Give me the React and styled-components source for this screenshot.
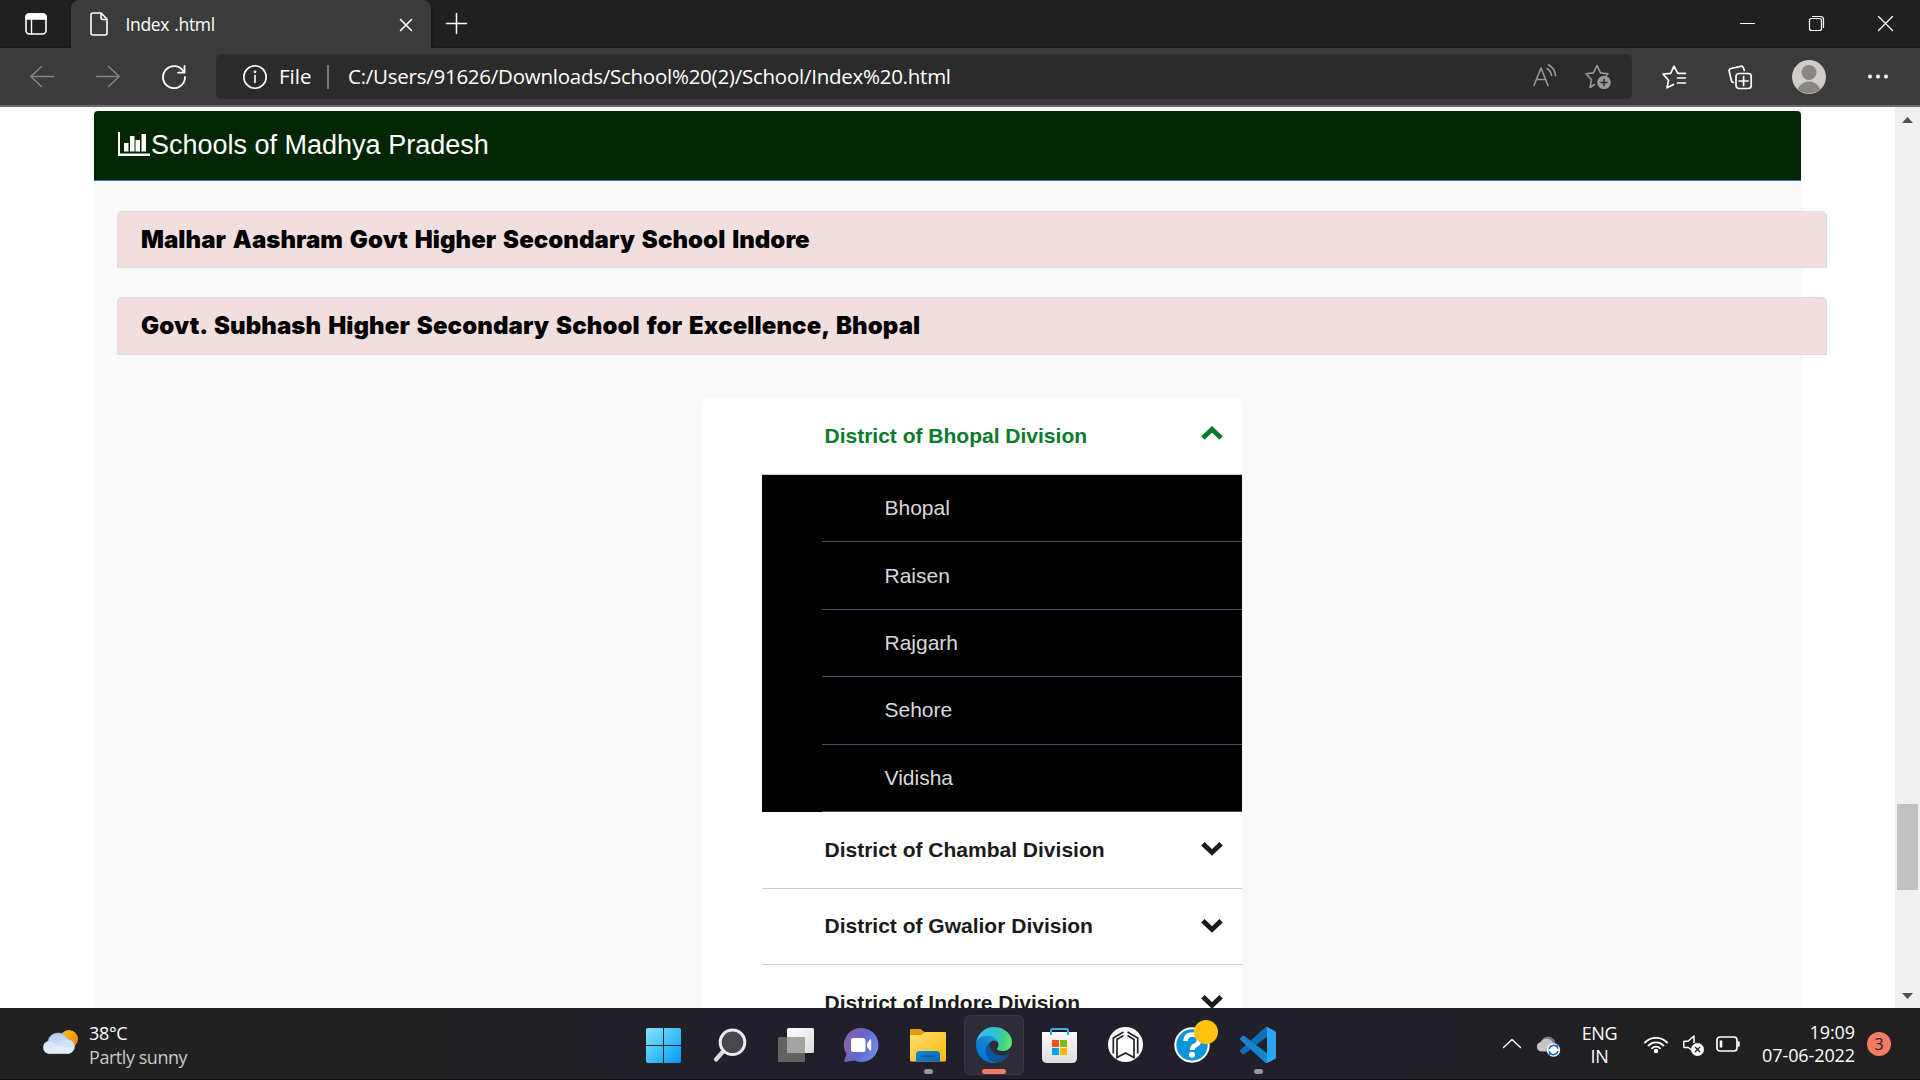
import React from "react";
import styled, { createGlobalStyle } from "styled-components";

const GlobalStyle = createGlobalStyle`
  * { box-sizing: border-box; }
  html, body { margin: 0; padding: 0; background: #fff; }
  body { width: 1920px; height: 1080px; overflow: hidden; font-family: "Liberation Sans", Arial, sans-serif; }
  svg { display: block; flex: none; overflow: visible; }
  ul { list-style: none; margin: 0; padding: 0; }
`;

const ui = `"Open Sans", "Noto Sans", sans-serif`;

const Screen = styled.div`
  width: 1920px;
  height: 1080px;
  display: flex;
  flex-direction: column;
  overflow: hidden;
`;

/* ---------- browser frame ---------- */
const TabStrip = styled.header`
  height: 48px;
  flex: none;
  display: flex;
  background: linear-gradient(#202020 46px, #181818);
  color: #fff;
`;
const Workspaces = styled.div`
  width: 71px;
  padding: 13px 0 0 25px;
`;
const Tab = styled.div`
  width: 360px;
  height: 48px;
  display: flex;
  align-items: center;
  padding: 0 18px 0 19px;
  background: #3b3b3b;
  border-radius: 8px 8px 0 0;
  box-shadow: 0 0 3px #111;
`;
const TabTitle = styled.span`
  flex: 1;
  margin-left: 17.5px;
  font: 17.5px/24px ${ui};
  letter-spacing: -0.35px;
  word-spacing: 1px;
  white-space: nowrap;
`;
const NewTab = styled.div`
  padding: 13px 0 0 15px;
`;
const WindowButtons = styled.div`
  margin-left: auto;
  display: flex;
  gap: 54px;
  padding: 16px 27px 0 0;
`;
const Toolbar = styled.div`
  height: 59px;
  flex: none;
  display: flex;
  align-items: center;
  background: #3b3b3b;
  border-bottom: 2px solid #6c6c6c;
  color: #fff;
`;
const NavButtons = styled.div`
  width: 216px;
  padding-left: 30px;
  display: flex;
  gap: 42px;
`;
const AddressBar = styled.div`
  width: 1416px;
  height: 45px;
  display: flex;
  align-items: center;
  padding: 0 21px 0 27px;
  background: #2b2b2b;
  border-radius: 6px;
`;
const AddressText = styled.span`
  padding-bottom: 2px;
  font: 20.5px/28px ${ui};
  letter-spacing: ${(p) => p.$spacing || "0"};
  white-space: nowrap;
`;
const Scheme = styled(AddressText)`
  width: 48px;
  margin-left: 12px;
`;
const Divider = styled.i`
  width: 2px;
  height: 24px;
  margin-right: 19px;
  background: #777;
`;
const AddressActions = styled.div`
  display: flex;
  gap: 28px;
  margin-left: auto;
`;
const ToolbarActions = styled.div`
  display: flex;
  align-items: center;
  margin-left: 30px;
  gap: 42px;
`;

/* ---------- page ---------- */
const Viewport = styled.div`
  height: 901px;
  flex: none;
  display: flex;
  overflow: hidden;
  background: #fff;
`;
const Page = styled.main`
  width: 1895px;
  padding-left: 93px;
`;
const Panel = styled.section`
  width: 1710px;
  height: 901px;
  padding-top: 4px;
  background: #f9f9f9;
`;
const PanelHeading = styled.h1`
  width: 1707px;
  height: 70px;
  margin: 0 0 30px 1px;
  padding: 0 0 3px 24px;
  display: flex;
  align-items: center;
  background: #022602;
  border-bottom: 1px solid #337ab7;
  border-radius: 4px 4px 0 0;
  color: #fff;
  font-size: 27px;
  font-weight: 400;
  line-height: 30px;
`;
const HeadingText = styled.span`
  margin-left: 1px;
  padding-top: 1px;
`;
const SchoolBar = styled.div`
  width: 1710px;
  height: ${(p) => p.$height}px;
  margin: 0 0 ${(p) => p.$gap}px 24px;
  padding: 0 23px;
  display: flex;
  align-items: center;
  background: #f2dede;
  border: 1px solid #ddd;
  border-radius: 5px 5px 0 0;
  color: #000;
  font: 900 24px/30px Inter, "Liberation Sans", sans-serif;
  letter-spacing: ${(p) => p.$spacing};
  word-spacing: 2px;
  white-space: nowrap;
`;
const Accordion = styled.ul`
  width: 540px;
  height: 640px;
  margin-left: 609px;
  background: #fff;
  border-radius: 6px;
  && { padding-left: 60px; }
`;
const Division = styled.div`
  height: ${(p) => (p.$open ? 77 : 76.6)}px;
  padding: 0 19.5px 0 62.5px;
  display: flex;
  align-items: center;
  justify-content: space-between;
  border-bottom: 1px solid #ccc;
  color: ${(p) => (p.$open ? "#0b7a2c" : "#1a1a1a")};
  font-size: 21px;
  font-weight: 700;
  line-height: 24px;
`;
const Submenu = styled.ul`
  background: #000;
  && { padding-left: 60px; }
`;
const District = styled.li`
  height: 67.4px;
  padding-left: 62.5px;
  display: flex;
  align-items: center;
  border-bottom: 1px solid #4b4a5e;
  color: #d9d9d9;
  font-size: 21px;
  line-height: 24px;
`;
const ChevronBox = styled.span`
  margin-bottom: ${(p) => (p.$up ? 6 : 1)}px;
`;
const Scrollbar = styled.aside`
  width: 25px;
  display: flex;
  flex-direction: column;
  align-items: center;
  padding: 10px 0 9px;
  background: #f0f0f0;
`;
const Thumb = styled.div`
  width: 21px;
  height: 86px;
  margin: 681px 0 auto;
  background: #c1c1c1;
`;

/* ---------- taskbar ---------- */
const Taskbar = styled.footer`
  height: 72px;
  flex: none;
  display: flex;
  background: linear-gradient(90deg, #212121, #212121 20%, #211f2a 38%, #211f2a 66%, #202020 88%);
  border-bottom: 1px solid #180a12;
  color: #fff;
  font: 18px/24px ${ui};
`;
const Weather = styled.div`
  width: 634px;
  padding: 13px 0 0 42px;
  display: flex;
`;
const WeatherText = styled.div`
  margin-left: 11px;
  display: flex;
  flex-direction: column;
  letter-spacing: -0.35px;
`;
const Muted = styled.span`
  color: #c8c8c8;
  letter-spacing: -0.45px;
`;
const Apps = styled.nav`
  display: flex;
  gap: 6px;
  padding-top: 7px;
`;
const AppButton = styled.div`
  width: 60px;
  height: 60px;
  padding: 11px 11px 0;
  display: flex;
  flex-direction: column;
  align-items: center;
  border: 1px solid ${(p) => (p.$active ? "#3a3842" : "transparent")};
  border-radius: 6px;
  background: ${(p) => (p.$active ? "#2e2c37" : "transparent")};
`;
const Running = styled.i`
  width: ${(p) => (p.$active ? 24 : 9)}px;
  height: 5px;
  flex: none;
  margin-top: 6px;
  border-radius: 3px;
  background: ${(p) => (p.$active ? "#f47c62" : "#97969c")};
`;
const Tray = styled.div`
  margin-left: auto;
  display: flex;
  align-items: flex-start;
`;
const Stack = styled.div`
  display: flex;
  flex-direction: column;
  align-items: ${(p) => p.$align};
  width: ${(p) => p.$width}px;
  padding-top: ${(p) => p.$top}px;
  line-height: 23px;
  letter-spacing: ${(p) => p.$spacing || "0"};
  white-space: nowrap;
`;
const TrayIcon = styled.div`
  margin: ${(p) => p.$top}px ${(p) => p.$right}px 0 ${(p) => p.$left || 0}px;
`;
const Badge = styled.span`
  width: 24px;
  height: 24px;
  margin: 24px 29px 0 12px;
  display: flex;
  align-items: center;
  justify-content: center;
  border-radius: 50%;
  background: #f47c62;
  color: #241a1a;
  font-size: 16px;
`;

const Line = ({ w, h, d, sw = 1.6, color = "#fff", children }) => (
  <svg width={w} height={h} viewBox={`0 0 ${w} ${h}`} fill="none" stroke={color} strokeWidth={sw} strokeLinecap="round" strokeLinejoin="round">
    {d && <path d={d} />}
    {children}
  </svg>
);

const Chevron = ({ up }) => (
  <ChevronBox $up={up}>
    <svg width="22" height="14" viewBox="0 0 22 14" fill="none" stroke="currentColor" strokeWidth="4.900">
      <path d={up ? "M1.900 12 11 3.300 20.100 12" : "M1.900 1.700 11 10.400 20.100 1.700"} />
    </svg>
  </ChevronBox>
);

const icons = {
  start: (
    <svg width="36" height="36">
      <defs>
        <linearGradient id="win" x1="0" y1="0" x2="36" y2="36" gradientUnits="userSpaceOnUse">
          <stop offset="0" stopColor="#8be4fe" /><stop offset=".5" stopColor="#3fc2fb" /><stop offset="1" stopColor="#0495f8" />
        </linearGradient>
      </defs>
      <path fill="url(#win)" d="M2 1h15v17H0V3q0-2 2-2zM18 1h15q2 0 2 2v15H18zM0 19h17v17H2q-2 0-2-2zM18 19h17v15q0 2-2 2H18z" />
    </svg>
  ),
  search: (
    <svg width="36" height="36">
      <path d="M11.500 24 4 32.500" stroke="#dcdcde" strokeWidth="4.200" strokeLinecap="round" />
      <circle cx="20.500" cy="15.300" r="12.300" fill="#47464f" stroke="#ececee" strokeWidth="3" />
    </svg>
  ),
  tasks: (
    <svg width="36" height="36">
      <defs>
        <linearGradient id="tv" x1="0" y1="0" x2="1" y2="1"><stop offset="0" stopColor="#fff" /><stop offset="1" stopColor="#dcdcdc" /></linearGradient>
      </defs>
      <rect x="0" y="10" width="27" height="25" rx="1.500" fill="#62625f" />
      <rect x="9" y="1" width="27" height="25" rx="1.500" fill="url(#tv)" />
      <path d="M9 10h18v16H10.500q-1.500 0-1.500-1.500z" fill="#a3a3a3" />
    </svg>
  ),
  chat: (
    <svg width="36" height="36">
      <defs>
        <linearGradient id="ch" x1="0" y1=".2" x2="1" y2=".6"><stop offset="0" stopColor="#8d62a8" /><stop offset=".5" stopColor="#6566c8" /><stop offset="1" stopColor="#6b8ae8" /></linearGradient>
      </defs>
      <path fill="url(#ch)" d="M17.500 1a17 17 0 1 1-7 32.500L1 35q-1.300 0-.7-1.500L2.500 27A17 17 0 0 1 17.500 1z" />
      <rect x="7" y="11" width="14.500" height="14" rx="2.500" fill="#fff" />
      <path fill="#fff" d="M23 16.500 26 12.500q1.200-.6 1.200 1v9q0 1.600-1.200 1L23 20z" />
    </svg>
  ),
  folder: (
    <svg width="36" height="36">
      <defs>
        <linearGradient id="fo" x1="0" y1="0" x2="1" y2="1"><stop offset="0" stopColor="#ffdf72" /><stop offset="1" stopColor="#fdb90f" /></linearGradient>
        <linearGradient id="fb" x1="0" y1="0" x2="1" y2="1"><stop offset="0" stopColor="#138ad8" /><stop offset="1" stopColor="#0865b5" /></linearGradient>
      </defs>
      <path d="M0 3q0-1 1-1h9.500l4 3H25v8H0z" fill="#e29d05" />
      <path d="M0 8h11l4.500-3H35q1 0 1 1v27q0 1.500-1.500 1.500h-33Q0 34.500 0 33z" fill="url(#fo)" />
      <path d="M6 34.500v-7q0-3.500 3.500-3.500h17q3.500 0 3.500 3.500v7z" fill="url(#fb)" />
      <path d="M11 29h14" stroke="#064c8f" strokeWidth="1.300" />
    </svg>
  ),
  edge: (
    <svg width="36" height="36" viewBox="0 0 256 256">
      <defs>
        <linearGradient id="e1" x1="63" y1="178" x2="241" y2="178" gradientUnits="userSpaceOnUse"><stop offset="0" stopColor="#0c59a4" /><stop offset="1" stopColor="#114a8b" /></linearGradient>
        <linearGradient id="e2" x1="150" y1="95" x2="46" y2="215" gradientUnits="userSpaceOnUse"><stop offset="0" stopColor="#1b9de2" /><stop offset=".4" stopColor="#1482d0" /><stop offset="1" stopColor="#0078d8" /></linearGradient>
        <linearGradient id="e3" x1="10" y1="70" x2="250" y2="130" gradientUnits="userSpaceOnUse"><stop offset="0" stopColor="#35c1f1" /><stop offset=".45" stopColor="#2bc3d2" /><stop offset=".75" stopColor="#43d08b" /><stop offset="1" stopColor="#66eb6e" /></linearGradient>
      </defs>
      <path fill="url(#e1)" d="M231 190.500c-3.400 1.800-6.900 3.400-10.500 4.700a101.500 101.500 0 0 1-35.900 6.500c-47.300 0-88.500-32.500-88.500-74.300.1-11.400 6.400-21.900 16.400-27.300-42.800 1.800-53.800 46.400-53.800 72.500 0 73.900 68.100 81.400 82.800 81.400 7.900 0 19.800-2.300 27-4.600l1.300-.4a128.300 128.300 0 0 0 66.600-52.800 4 4 0 0 0-5.400-5.700z" />
      <path fill="url(#e2)" d="M105.700 241.400a79.200 79.200 0 0 1-22.700-21.300 80.700 80.700 0 0 1 29.500-120c3.200-1.500 8.500-4.100 15.600-4a32.400 32.400 0 0 1 25.700 13 31.900 31.900 0 0 1 6.300 18.700c0-.2 24.500-79.600-80-79.600-43.900 0-80 41.700-80 78.200-.2 19.300 4 38.500 12.100 56a128 128 0 0 0 156.400 67.100 75.500 75.500 0 0 1-62.800-8z" />
      <path fill="url(#e3)" d="M152.300 148.900c-.9 1-3.400 2.500-3.400 5.600 0 2.600 1.700 5.200 4.800 7.300 14.300 10 41.400 8.600 41.500 8.600a59.600 59.600 0 0 0 30.300-8.300A61.400 61.400 0 0 0 255.900 109.300c.3-22.400-8-37.300-11.300-43.900C223.500 23.900 177.700 0 128 0A128 128 0 0 0 0 126.200c.5-36.500 36.800-66 80-66 3.500 0 23.500.3 42 10.100 16.300 8.500 24.900 18.900 30.800 29.200 6.200 10.700 7.300 24.100 7.300 29.500s-2.700 13.300-7.800 19.900z" />
    </svg>
  ),
  store: (
    <svg width="36" height="36">
      <defs><linearGradient id="st" x1="0" y1="0" x2="0" y2="1"><stop offset="0" stopColor="#fbfbfb" /><stop offset="1" stopColor="#dedede" /></linearGradient></defs>
      <path d="M0 5h35v26q0 5-5 5H5q-5 0-5-5z" fill="url(#st)" />
      <path d="M9 8V3.500Q9 2 10.500 2h14Q26 2 26 3.500V8" fill="none" stroke="#2db3ee" strokeWidth="2" />
      <path fill="#f25022" d="M10 13h7v7h-7z" /><path fill="#7fba00" d="M18 13h7v7h-7z" />
      <path fill="#00a4ef" d="M10 21h7v7h-7z" /><path fill="#ffb900" d="M18 21h7v7h-7z" />
    </svg>
  ),
  hub: (
    <svg width="36" height="36">
      <circle cx="17.500" cy="17.500" r="17.500" fill="#fff" />
      <g fill="none" stroke="#24232b" strokeWidth="1.700">
        <path d="M15.500 5 5.300 11v15.500M19.500 5l10.200 6v15.500" />
        <path d="M15.500 8.500 9 12.500v18l8.500-4.500 8.500 4.500v-18l-6.500-4" />
      </g>
    </svg>
  ),
  help: (
    <svg width="36" height="36">
      <circle cx="18" cy="18" r="16.700" fill="#0c96d8" stroke="#fff" strokeWidth="2" />
      <path d="M11.500 14q.3-6.500 7-6.500 6.500.3 6.500 5.700 0 3.500-4 5.500-2.800 1.300-2.800 4.300" fill="none" stroke="#fff" strokeWidth="4.600" />
      <circle cx="18" cy="27.800" r="3" fill="#fff" />
      <circle cx="32" cy="5" r="12" fill="#ffc20e" />
    </svg>
  ),
  code: (
    <svg width="36" height="36" viewBox="0 0 100 100">
      <path fill="#0e70b8" d="M96.500 10.800 75.900.9a6.200 6.200 0 0 0-7.100 1.200L1.300 63.600a4.200 4.200 0 0 0 0 6.200l5.500 5a4.200 4.200 0 0 0 5.400.2L93.400 13.400c2.700-2.100 6.600-.1 6.600 3.300v-.3a6.200 6.200 0 0 0-3.500-5.600z" />
      <path fill="#1583cd" d="m96.500 89.200-20.600 9.900a6.200 6.200 0 0 1-7.100-1.200L1.300 36.400a4.200 4.200 0 0 1 0-6.200l5.500-5a4.200 4.200 0 0 1 5.400-.2l81.200 61.600c2.700 2.100 6.600.1 6.600-3.300v.3a6.200 6.200 0 0 1-3.500 5.600z" />
      <path fill="#2aa5f2" d="M75.900 99.100a6.200 6.200 0 0 1-7.100-1.200c2.300 2.300 6.200.7 6.200-2.600V4.700c0-3.300-3.900-4.900-6.200-2.600a6.200 6.200 0 0 1 7.100-1.200l20.600 9.900a6.200 6.200 0 0 1 3.500 5.600v67.200a6.200 6.200 0 0 1-3.500 5.600z" />
    </svg>
  ),
};

const apps = [
  { id: "start" }, { id: "search" }, { id: "tasks" }, { id: "chat" },
  { id: "folder", running: true }, { id: "edge", running: true, active: true },
  { id: "store" }, { id: "hub" }, { id: "help" }, { id: "code", running: true },
];

const divisions = [
  { name: "Bhopal", districts: ["Bhopal", "Raisen", "Rajgarh", "Sehore", "Vidisha"] },
  { name: "Chambal" },
  { name: "Gwalior" },
  { name: "Indore" },
];

export default function App() {
  return (
    <Screen>
      <GlobalStyle />
      <TabStrip>
        <Workspaces>
          <Line w={22} h={22}>
            <rect x="1" y="1" width="20" height="20" rx="3.500" />
            <path d="M1 6V4q0-3 3-3h14q3 0 3 3v2z" fill="#fff" />
            <path d="M6.500 6v15" strokeWidth="1.400" />
          </Line>
        </Workspaces>
        <Tab>
          <Line w={18} h={24} d="M3 1h8l6 6v14q0 2-2 2H3q-2 0-2-2V3q0-2 2-2zM11 1v4.500Q11 7.500 13 7.500h4" />
          <TabTitle>Index .html</TabTitle>
          <Line w={14} h={14} d="M1.500 2.500l11 11M12.500 2.500l-11 11" />
        </Tab>
        <NewTab><Line w={21} h={21} d="M10.500 .5v20M.5 10.500h20" sw={1.5} /></NewTab>
        <WindowButtons>
          <Line w={15} h={15} d="M.5 7.500h14" sw={1.2} />
          <Line w={15} h={15} d="M2.500 2.500h8q2 0 2 2v8q0 2-2 2h-8q-2 0-2-2v-8q0-2 2-2zM3.500 .5h8q3 0 3 3v8" sw={1.2} />
          <Line w={15} h={15} d="M.5 .5l14 14M14.500 .5l-14 14" sw={1.3} />
        </WindowButtons>
      </TabStrip>

      <Toolbar>
        <NavButtons>
          <Line w={24} h={24} color="#858585" sw={1.5} d="M23.500 11.500H.8M11.500 1.500l-10.700 10 10.700 10" />
          <Line w={24} h={24} color="#858585" sw={1.5} d="M.5 11.500h22.700M12.500 1.500l10.700 10-10.700 10" />
          <Line w={24} h={24} sw={1.8} d="M22 7.500A11 11 0 1 0 23 12M22.500 1v6.700h-6.500" />
        </NavButtons>
        <AddressBar>
          <Line w={24} h={24} sw={1.6}>
            <circle cx="12" cy="12" r="11.200" />
            <path d="M12 10.500v7" />
            <circle cx="12" cy="6.800" r=".6" fill="#fff" />
          </Line>
          <Scheme>File</Scheme>
          <Divider />
          <AddressText $spacing="-0.25px">C:/Users/91626/Downloads/School%20(2)/School/Index%20.html</AddressText>
          <AddressActions>
            <Line w={24} h={24} color="#999" d="M1 21.500 8 4l7 17.500M3.500 15.500h9M14 4.500q4 2.500 4.500 7M15.500 .8q6.500 3.700 7 11" />
            <Line w={26} h={26} color="#999">
              <path d="M9.500 20.500 5 23.500l1.500-7.700L1 9.800l7.500-.9L12 1.500l3.500 7.400 7.500 .9-1.500 1.800" />
              <circle cx="19" cy="18.500" r="6" fill="#999" />
              <path d="M19 15.500v6M16 18.500h6" stroke="#2b2b2b" />
            </Line>
          </AddressActions>
        </AddressBar>
        <ToolbarActions>
          <Line w={24} h={24} sw={1.7} d="M23.500 8.300h-7.700L12 1.200 8.600 8.300 1 9.200l5.500 6L5 22.800l6.500-3.300M15.500 13h8M15.500 18h8" />
          <Line w={24} h={24} sw={1.7}>
            <rect x="8" y="8.500" width="15.200" height="15" rx="3" />
            <path d="M15.600 11.500v9M11.100 16h9M16.200 5.500l-.8-2.700q-.7-2-2.800-1.500L3 3.500Q.7 4.200 1.200 6.500L3.500 16q.4 1.300 2 1.500" />
          </Line>
          <svg width="32" height="34" viewBox="2 0 32 34">
            <defs><clipPath id="av"><circle cx="17" cy="17" r="16.500" /></clipPath></defs>
            <circle cx="17" cy="17" r="17" fill="#d0cecb" />
            <circle cx="17" cy="12.500" r="7.500" fill="#8a8683" />
            <circle cx="17" cy="33.500" r="12" fill="#8a8683" clipPath="url(#av)" />
          </svg>
          <svg width="20" height="6"><circle cx="2" cy="2.500" r="2" fill="#fff" /><circle cx="10" cy="2.500" r="2" fill="#fff" /><circle cx="18" cy="2.500" r="2" fill="#fff" /></svg>
        </ToolbarActions>
      </Toolbar>

      <Viewport>
        <Page>
          <Panel>
            <PanelHeading>
              <svg width="32" height="24" fill="#fff">
                <path d="M0 0h2v21.500h30V24H0zM6 11h4.500v8.500H6zM12 4h4.500v15.500H12zM17.500 8H22v11.500h-4.500zM23.500 2H28v17.500h-4.500z" />
              </svg>
              <HeadingText>Schools of Madhya Pradesh</HeadingText>
            </PanelHeading>
            <SchoolBar $height={57} $gap={29} $spacing="0.05px">Malhar Aashram Govt Higher Secondary School Indore</SchoolBar>
            <SchoolBar $height={58} $gap={43} $spacing="0.1px">Govt. Subhash Higher Secondary School for Excellence, Bhopal</SchoolBar>
            <Accordion>
              {divisions.map((d) => (
                <li key={d.name}>
                  <Division $open={!!d.districts}>
                    District of {d.name} Division
                    <Chevron up={!!d.districts} />
                  </Division>
                  {d.districts && (
                    <Submenu>{d.districts.map((n) => <District key={n}>{n}</District>)}</Submenu>
                  )}
                </li>
              ))}
            </Accordion>
          </Panel>
        </Page>
        <Scrollbar>
          <svg width="11" height="6"><path d="M0 6 5.500 0 11 6z" fill="#505050" /></svg>
          <Thumb />
          <svg width="11" height="6"><path d="M0 0h11L5.500 6z" fill="#505050" /></svg>
        </Scrollbar>
      </Viewport>

      <Taskbar>
        <Weather>
          <svg width="36" height="36" viewBox="0 -1 36 36">
            <defs>
              <linearGradient id="sun" x1="0" y1="0" x2="1" y2="1"><stop offset="0" stopColor="#ffc800" /><stop offset="1" stopColor="#f07a10" /></linearGradient>
              <linearGradient id="cl" x1="0" y1="0" x2="0" y2="1"><stop offset="0" stopColor="#b3cbf6" /><stop offset="1" stopColor="#e3ecf8" /></linearGradient>
            </defs>
            <circle cx="27" cy="17" r="9" fill="url(#sun)" />
            <path d="M7 31.500a6.300 6.300 0 0 1-1-12.300 10.500 10.500 0 0 1 20-1.500 7 7 0 0 1 1 13.800z" fill="url(#cl)" stroke="#9fb4d6" strokeWidth=".6" />
            <circle cx="25.500" cy="24.500" r="7" fill="#d5e2f6" />
            <circle cx="7.500" cy="25.500" r="6" fill="#dbe6f6" />
            <path d="M7 31.500q-4-.5-5.500-4 8-2 15-4 8 2 15 2-1.500 5.500-5.500 6z" fill="#e3ecf7" />
          </svg>
          <WeatherText>
            <span>38°C</span>
            <Muted>Partly sunny</Muted>
          </WeatherText>
        </Weather>
        <Apps>
          {apps.map((a) => (
            <AppButton key={a.id} $active={a.active}>
              {icons[a.id]}
              {a.running && <Running $active={a.active} />}
            </AppButton>
          ))}
        </Apps>
        <Tray>
          <TrayIcon $top={31} $right={15}><Line w={18} h={9} d="M.5 8.500 9 .5l8.500 8" sw={1.4} /></TrayIcon>
          <TrayIcon $top={28} $right={22}>
            <svg width="24" height="22">
              <circle cx="12" cy="8" r="7.500" fill="#777" />
              <path d="M5 15.500a4.900 4.900 0 0 1-.3-9.600 7 7 0 0 1 12.800 2.600v7z" fill="#c4c4c4" />
              <circle cx="17.500" cy="14" r="6.700" fill="#fff" />
              <path d="M13 13a4.700 4.700 0 0 1 8.500-1.500V9.300M22 15a4.700 4.700 0 0 1-8.500 1.500v2.200" fill="none" stroke="#0f6cbd" strokeWidth="1.500" />
            </svg>
          </TrayIcon>
          <Stack $align="center" $width={35} $top={13.5} $spacing="-0.3px"><span>ENG</span><span>IN</span></Stack>
          <TrayIcon $top={26} $right={15} $left={27}>
            <Line w={24} h={20} sw={1.8}>
              <path d="M1 8.500a15.500 15.500 0 0 1 22 0M4.500 11.500a10.600 10.600 0 0 1 15 0M8 14.300a5.800 5.800 0 0 1 8 0" />
              <circle cx="12" cy="17" r="1.300" fill="#fff" />
            </Line>
          </TrayIcon>
          <TrayIcon $top={27} $right={12}>
            <svg width="21" height="21" fill="none">
              <path d="M6 12.500H1.500q-.7 0-.7-.7V7q0-.7 .7-.7H5l6-5.300v7" stroke="#fff" strokeWidth="1.500" strokeLinejoin="round" />
              <path d="M5.500 12.500l3 2.500" stroke="#fff" strokeWidth="1.500" />
              <circle cx="14.500" cy="14.500" r="6.500" fill="#fff" />
              <path d="M12 12l5 5M17 12l-5 5" stroke="#222" strokeWidth="1.400" />
            </svg>
          </TrayIcon>
          <TrayIcon $top={28} $right={23}>
            <Line w={24} h={16} sw={1.7}>
              <rect x="1" y="1" width="20" height="14" rx="3" />
              <path d="M5 4.500v7" strokeWidth="2.600" strokeLinecap="butt" />
              <path d="M22.700 6.300v3.400" strokeWidth="2" />
            </Line>
          </TrayIcon>
          <Stack $align="flex-end" $width={92} $top={12.5} $spacing="-0.1px"><span>19:09</span><span>07-06-2022</span></Stack>
          <Badge>3</Badge>
        </Tray>
      </Taskbar>
    </Screen>
  );
}
